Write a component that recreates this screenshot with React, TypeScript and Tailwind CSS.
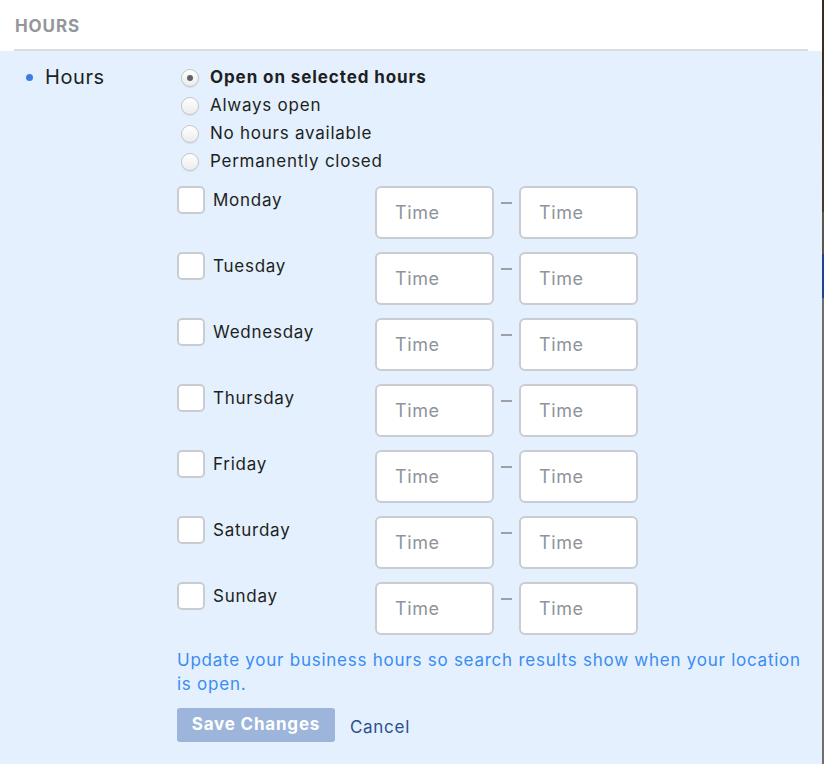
import React, { useState } from "react";

const days = ["Monday", "Tuesday", "Wednesday", "Thursday", "Friday", "Saturday", "Sunday"];
const options = ["Open on selected hours", "Always open", "No hours available", "Permanently closed"];

function Radio({ checked }: { checked: boolean }) {
  return (
    <span className="w-[18px] h-[18px] rounded-full border border-[#c4c6c9] bg-gradient-to-b from-white to-[#ececec] shadow-[0_1px_1px_rgba(0,0,0,0.08)] flex items-center justify-center">
      {checked && <span className="w-[6px] h-[6px] rounded-full bg-[#5f6268]" />}
    </span>
  );
}

export default function App() {
  const [selected, setSelected] = useState(0);

  return (
    <div className="w-[824px] h-[764px] flex font-['Inter','Liberation_Sans',sans-serif] overflow-hidden">
      <div className="w-[822px] flex flex-col">
        <div className="bg-white px-[14px]">
          <div className="h-[51px] border-b-2 border-[#dcdde0] pl-[1px] pt-[14px] text-[17px] font-bold text-[#93969b] tracking-[0.9px]">
            HOURS
          </div>
        </div>
        <div className="flex-1 bg-[#e4f0fd] flex">
          <div className="w-[177px] flex items-start pl-[26px] pt-[14px]">
            <span className="w-[7px] h-[7px] rounded-full bg-[#3b7de4] mt-[9px]" />
            <span className="ml-[12px] text-[20px] tracking-[0.6px] text-[#1d1f22] leading-[24px]">Hours</span>
          </div>
          <div className="flex-1 flex flex-col pt-[13px] pr-[8px]">
            {options.map((opt, i) => (
              <label
                key={opt}
                className="h-[28px] flex items-center pl-[4px] cursor-pointer"
                onClick={() => setSelected(i)}
              >
                <Radio checked={selected === i} />
                <span
                  className={
                    "ml-[11px] text-[17px] text-[#1d1f22] " +
                    (selected === i ? "font-bold tracking-[0.9px]" : "tracking-[0.75px]")
                  }
                >
                  {opt}
                </span>
              </label>
            ))}
            <div className="mt-[10px] flex flex-col gap-[13px]">
              {days.map(day => (
                <div key={day} className="flex items-start h-[53px]">
                  <div className="w-[28px] h-[28px] rounded-[5px] border-2 border-[#c9cdd2] bg-white" />
                  <span className="ml-[8px] w-[162px] h-[28px] leading-[28px] text-[17px] tracking-[0.75px] text-[#1d1f22]">
                    {day}
                  </span>
                  <input
                    placeholder="Time"
                    className="w-[119px] h-[53px] rounded-[6px] border-2 border-[#c9cdd2] bg-white px-[18px] text-[18px] tracking-[0.6px] text-[#1d1f22] placeholder:text-[#8e949b] outline-none"
                  />
                  <div className="w-[25px] flex justify-center pt-[16px]">
                    <span className="w-[11px] h-[2px] bg-[#9da1a6]" />
                  </div>
                  <input
                    placeholder="Time"
                    className="w-[119px] h-[53px] rounded-[6px] border-2 border-[#c9cdd2] bg-white px-[18px] text-[18px] tracking-[0.6px] text-[#1d1f22] placeholder:text-[#8e949b] outline-none"
                  />
                </div>
              ))}
            </div>
            <p className="mt-[13px] text-[17px] leading-[24px] tracking-[0.75px] text-[#3a8cf2]">
              Update your business hours so search results show when your location is open.
            </p>
            <div className="mt-[12px] flex items-center">
              <button className="w-[158px] h-[34px] rounded-[3px] bg-[#9db5da] text-white font-bold text-[17px] tracking-[0.8px]">
                Save Changes
              </button>
              <button className="ml-[15px] pt-[5px] text-[17px] tracking-[0.7px] text-[#2b4f8e]">Cancel</button>
            </div>
          </div>
        </div>
      </div>
      <div className="w-[2px] flex flex-col">
        <div className="h-[212px] bg-gradient-to-b from-[#3a2a18] to-[#4a3a26]" />
        <div className="h-[42px] bg-[#5a5650]" />
        <div className="h-[44px] bg-[#23408a]" />
        <div className="flex-1 bg-[#6e6e6e]" />
      </div>
    </div>
  );
}
